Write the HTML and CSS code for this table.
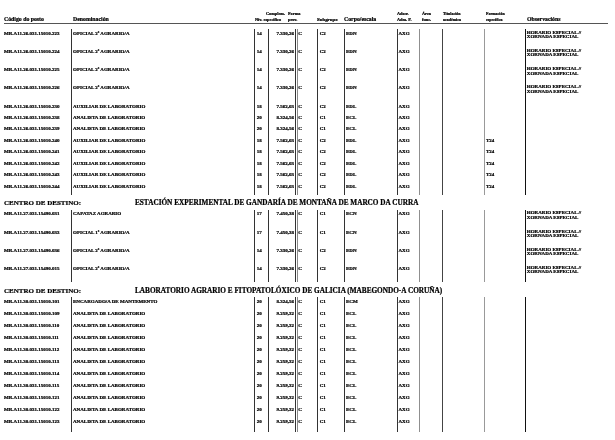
FILE: index.html
```html
<!DOCTYPE html>
<html lang="gl">
<head>
<meta charset="utf-8">
<title>Relación de postos</title>
<link rel="stylesheet" href="styles.css">
</head>
<body>
<div class="page">
  <div class="head">
    <div class="h"><span>Código do posto</span></div>
    <div class="h"><span>Denominación</span></div>
    <div class="h sm"><span>Nív.</span></div>
    <div class="h sm"><span class="ind">Complem.</span><span>específico</span></div>
    <div class="h sm"><span>Forma</span><span>prov.</span></div>
    <div class="h md"><span>Subgrupo</span></div>
    <div class="h"><span>Corpo/escala</span></div>
    <div class="h sm"><span>Adscr.</span><span>Adm. P.</span></div>
    <div class="h sm"><span>Área</span><span>func.</span></div>
    <div class="h xs"><span>Titulación</span><span>académica</span></div>
    <div class="h xs"><span>Formación</span><span>específica</span></div>
    <div class="h"><span>Observacións</span></div>
  </div>

  <div class="sec s1">
    <div class="row tall"><div class="c code">MR.A11.26.031.15010.223</div><div class="c den">OFICIAL 2ª AGRARIO/A</div><div class="c niv">14</div><div class="c comp">7.330,26</div><div class="c forma">C</div><div class="c sub">C2</div><div class="c corpo">EDN</div><div class="c adsc">AXG</div><div class="c area"></div><div class="c tit"></div><div class="c form"></div><div class="c obs">HORARIO ESPECIAL //<br>XORNADA ESPECIAL</div></div>
    <div class="row tall"><div class="c code">MR.A11.26.031.15010.224</div><div class="c den">OFICIAL 2ª AGRARIO/A</div><div class="c niv">14</div><div class="c comp">7.330,26</div><div class="c forma">C</div><div class="c sub">C2</div><div class="c corpo">EDN</div><div class="c adsc">AXG</div><div class="c area"></div><div class="c tit"></div><div class="c form"></div><div class="c obs">HORARIO ESPECIAL //<br>XORNADA ESPECIAL</div></div>
    <div class="row tall"><div class="c code">MR.A11.26.031.15010.225</div><div class="c den">OFICIAL 2ª AGRARIO/A</div><div class="c niv">14</div><div class="c comp">7.330,26</div><div class="c forma">C</div><div class="c sub">C2</div><div class="c corpo">EDN</div><div class="c adsc">AXG</div><div class="c area"></div><div class="c tit"></div><div class="c form"></div><div class="c obs">HORARIO ESPECIAL //<br>XORNADA ESPECIAL</div></div>
    <div class="row tall"><div class="c code">MR.A11.26.031.15010.226</div><div class="c den">OFICIAL 2ª AGRARIO/A</div><div class="c niv">14</div><div class="c comp">7.330,26</div><div class="c forma">C</div><div class="c sub">C2</div><div class="c corpo">EDN</div><div class="c adsc">AXG</div><div class="c area"></div><div class="c tit"></div><div class="c form"></div><div class="c obs">HORARIO ESPECIAL //<br>XORNADA ESPECIAL</div></div>
    <div class="row"><div class="c code">MR.A11.26.031.15010.230</div><div class="c den">AUXILIAR DE LABORATORIO</div><div class="c niv">18</div><div class="c comp">7.562,03</div><div class="c forma">C</div><div class="c sub">C2</div><div class="c corpo">EDL</div><div class="c adsc">AXG</div><div class="c area"></div><div class="c tit"></div><div class="c form"></div><div class="c obs"></div></div>
    <div class="row"><div class="c code">MR.A11.26.031.15010.238</div><div class="c den">ANALISTA DE LABORATORIO</div><div class="c niv">20</div><div class="c comp">8.324,56</div><div class="c forma">C</div><div class="c sub">C1</div><div class="c corpo">ECL</div><div class="c adsc">AXG</div><div class="c area"></div><div class="c tit"></div><div class="c form"></div><div class="c obs"></div></div>
    <div class="row"><div class="c code">MR.A11.26.031.15010.239</div><div class="c den">ANALISTA DE LABORATORIO</div><div class="c niv">20</div><div class="c comp">8.324,56</div><div class="c forma">C</div><div class="c sub">C1</div><div class="c corpo">ECL</div><div class="c adsc">AXG</div><div class="c area"></div><div class="c tit"></div><div class="c form"></div><div class="c obs"></div></div>
    <div class="row"><div class="c code">MR.A11.26.031.15010.240</div><div class="c den">AUXILIAR DE LABORATORIO</div><div class="c niv">18</div><div class="c comp">7.562,03</div><div class="c forma">C</div><div class="c sub">C2</div><div class="c corpo">EDL</div><div class="c adsc">AXG</div><div class="c area"></div><div class="c tit"></div><div class="c form">T24</div><div class="c obs"></div></div>
    <div class="row"><div class="c code">MR.A11.26.031.15010.241</div><div class="c den">AUXILIAR DE LABORATORIO</div><div class="c niv">18</div><div class="c comp">7.562,03</div><div class="c forma">C</div><div class="c sub">C2</div><div class="c corpo">EDL</div><div class="c adsc">AXG</div><div class="c area"></div><div class="c tit"></div><div class="c form">T24</div><div class="c obs"></div></div>
    <div class="row"><div class="c code">MR.A11.26.031.15010.242</div><div class="c den">AUXILIAR DE LABORATORIO</div><div class="c niv">18</div><div class="c comp">7.562,03</div><div class="c forma">C</div><div class="c sub">C2</div><div class="c corpo">EDL</div><div class="c adsc">AXG</div><div class="c area"></div><div class="c tit"></div><div class="c form">T24</div><div class="c obs"></div></div>
    <div class="row"><div class="c code">MR.A11.26.031.15010.243</div><div class="c den">AUXILIAR DE LABORATORIO</div><div class="c niv">18</div><div class="c comp">7.562,03</div><div class="c forma">C</div><div class="c sub">C2</div><div class="c corpo">EDL</div><div class="c adsc">AXG</div><div class="c area"></div><div class="c tit"></div><div class="c form">T24</div><div class="c obs"></div></div>
    <div class="row last"><div class="c code">MR.A11.26.031.15010.244</div><div class="c den">AUXILIAR DE LABORATORIO</div><div class="c niv">18</div><div class="c comp">7.562,03</div><div class="c forma">C</div><div class="c sub">C2</div><div class="c corpo">EDL</div><div class="c adsc">AXG</div><div class="c area"></div><div class="c tit"></div><div class="c form">T24</div><div class="c obs"></div></div>
  </div>

  <div class="dest"><span class="lbl">CENTRO DE DESTINO:</span><span class="name">ESTACIÓN EXPERIMENTAL DE GANDARÍA DE MONTAÑA DE MARCO DA CURRA</span></div>

  <div class="sec s2">
    <div class="row tall"><div class="c code">MR.A11.27.031.15490.031</div><div class="c den">CAPATAZ AGRARIO</div><div class="c niv">17</div><div class="c comp">7.450,38</div><div class="c forma">C</div><div class="c sub">C1</div><div class="c corpo">ECN</div><div class="c adsc">AXG</div><div class="c area"></div><div class="c tit"></div><div class="c form"></div><div class="c obs">HORARIO ESPECIAL //<br>XORNADA ESPECIAL</div></div>
    <div class="row tall"><div class="c code">MR.A11.27.031.15490.033</div><div class="c den">OFICIAL 1ª AGRARIO/A</div><div class="c niv">17</div><div class="c comp">7.450,38</div><div class="c forma">C</div><div class="c sub">C1</div><div class="c corpo">ECN</div><div class="c adsc">AXG</div><div class="c area"></div><div class="c tit"></div><div class="c form"></div><div class="c obs">HORARIO ESPECIAL //<br>XORNADA ESPECIAL</div></div>
    <div class="row tall"><div class="c code">MR.A11.27.031.15490.036</div><div class="c den">OFICIAL 2ª AGRARIO/A</div><div class="c niv">14</div><div class="c comp">7.330,26</div><div class="c forma">C</div><div class="c sub">C2</div><div class="c corpo">EDN</div><div class="c adsc">AXG</div><div class="c area"></div><div class="c tit"></div><div class="c form"></div><div class="c obs">HORARIO ESPECIAL //<br>XORNADA ESPECIAL</div></div>
    <div class="row tall"><div class="c code">MR.A11.27.031.15490.015</div><div class="c den">OFICIAL 2ª AGRARIO/A</div><div class="c niv">14</div><div class="c comp">7.330,26</div><div class="c forma">C</div><div class="c sub">C2</div><div class="c corpo">EDN</div><div class="c adsc">AXG</div><div class="c area"></div><div class="c tit"></div><div class="c form"></div><div class="c obs">HORARIO ESPECIAL //<br>XORNADA ESPECIAL</div></div>
  </div>

  <div class="dest"><span class="lbl">CENTRO DE DESTINO:</span><span class="name">LABORATORIO AGRARIO E FITOPATOLÓXICO DE GALICIA (MABEGONDO-A CORUÑA)</span></div>

  <div class="sec s3">
    <div class="row"><div class="c code">MR.A11.30.031.15010.101</div><div class="c den">ENCARGADO/A DE MANTEMENTO</div><div class="c niv">20</div><div class="c comp">8.324,56</div><div class="c forma">C</div><div class="c sub">C1</div><div class="c corpo">ECM</div><div class="c adsc">AXG</div><div class="c area"></div><div class="c tit"></div><div class="c form"></div><div class="c obs"></div></div>
    <div class="row"><div class="c code">MR.A11.30.031.15010.109</div><div class="c den">ANALISTA DE LABORATORIO</div><div class="c niv">20</div><div class="c comp">9.259,32</div><div class="c forma">C</div><div class="c sub">C1</div><div class="c corpo">ECL</div><div class="c adsc">AXG</div><div class="c area"></div><div class="c tit"></div><div class="c form"></div><div class="c obs"></div></div>
    <div class="row"><div class="c code">MR.A11.30.031.15010.110</div><div class="c den">ANALISTA DE LABORATORIO</div><div class="c niv">20</div><div class="c comp">9.259,32</div><div class="c forma">C</div><div class="c sub">C1</div><div class="c corpo">ECL</div><div class="c adsc">AXG</div><div class="c area"></div><div class="c tit"></div><div class="c form"></div><div class="c obs"></div></div>
    <div class="row"><div class="c code">MR.A11.30.031.15010.111</div><div class="c den">ANALISTA DE LABORATORIO</div><div class="c niv">20</div><div class="c comp">9.259,32</div><div class="c forma">C</div><div class="c sub">C1</div><div class="c corpo">ECL</div><div class="c adsc">AXG</div><div class="c area"></div><div class="c tit"></div><div class="c form"></div><div class="c obs"></div></div>
    <div class="row"><div class="c code">MR.A11.30.031.15010.112</div><div class="c den">ANALISTA DE LABORATORIO</div><div class="c niv">20</div><div class="c comp">9.259,32</div><div class="c forma">C</div><div class="c sub">C1</div><div class="c corpo">ECL</div><div class="c adsc">AXG</div><div class="c area"></div><div class="c tit"></div><div class="c form"></div><div class="c obs"></div></div>
    <div class="row"><div class="c code">MR.A11.30.031.15010.113</div><div class="c den">ANALISTA DE LABORATORIO</div><div class="c niv">20</div><div class="c comp">9.259,32</div><div class="c forma">C</div><div class="c sub">C1</div><div class="c corpo">ECL</div><div class="c adsc">AXG</div><div class="c area"></div><div class="c tit"></div><div class="c form"></div><div class="c obs"></div></div>
    <div class="row"><div class="c code">MR.A11.30.031.15010.114</div><div class="c den">ANALISTA DE LABORATORIO</div><div class="c niv">20</div><div class="c comp">9.259,32</div><div class="c forma">C</div><div class="c sub">C1</div><div class="c corpo">ECL</div><div class="c adsc">AXG</div><div class="c area"></div><div class="c tit"></div><div class="c form"></div><div class="c obs"></div></div>
    <div class="row"><div class="c code">MR.A11.30.031.15010.115</div><div class="c den">ANALISTA DE LABORATORIO</div><div class="c niv">20</div><div class="c comp">9.259,32</div><div class="c forma">C</div><div class="c sub">C1</div><div class="c corpo">ECL</div><div class="c adsc">AXG</div><div class="c area"></div><div class="c tit"></div><div class="c form"></div><div class="c obs"></div></div>
    <div class="row"><div class="c code">MR.A11.30.031.15010.121</div><div class="c den">ANALISTA DE LABORATORIO</div><div class="c niv">20</div><div class="c comp">9.259,32</div><div class="c forma">C</div><div class="c sub">C1</div><div class="c corpo">ECL</div><div class="c adsc">AXG</div><div class="c area"></div><div class="c tit"></div><div class="c form"></div><div class="c obs"></div></div>
    <div class="row"><div class="c code">MR.A11.30.031.15010.122</div><div class="c den">ANALISTA DE LABORATORIO</div><div class="c niv">20</div><div class="c comp">9.259,32</div><div class="c forma">C</div><div class="c sub">C1</div><div class="c corpo">ECL</div><div class="c adsc">AXG</div><div class="c area"></div><div class="c tit"></div><div class="c form"></div><div class="c obs"></div></div>
    <div class="row last"><div class="c code">MR.A11.30.031.15010.123</div><div class="c den">ANALISTA DE LABORATORIO</div><div class="c niv">20</div><div class="c comp">9.259,32</div><div class="c forma">C</div><div class="c sub">C1</div><div class="c corpo">ECL</div><div class="c adsc">AXG</div><div class="c area"></div><div class="c tit"></div><div class="c form"></div><div class="c obs"></div></div>
  </div>
</div>
</body>
</html>
```
FILE: styles.css
```css
html, body {
  margin: 0;
  padding: 0;
  background: #ffffff;
}
body {
  font-family: "Liberation Serif", "Times New Roman", serif;
  color: #000000;
  font-weight: bold;
  width: 615px;
  height: 440px;
  overflow: hidden;
}
.page {
  padding: 0 5px 0 4px;
  background: #ffffff;
  filter: grayscale(1);
  -webkit-text-stroke: 0.22px #000000;
}

/* header */
.head {
  display: grid;
  grid-template-columns: 69px 182px 8.5px 24.5px 29px 27px 53px 25px 21px 43px 41px 80px;
  height: 23px;
  border-bottom: 1px solid #555555;
  margin-right: 2px;
  font-size: 5.8px;
  line-height: 5.8px;
}
.h {
  display: flex;
  flex-direction: column;
  justify-content: flex-end;
  white-space: nowrap;
}
.h.sm { font-size: 4.3px; }
.h.md { font-size: 4.9px; }
.h.xs { font-size: 4px; }
.h .ind {
  margin-left: 2.5px;
}

/* sections */
.sec {
  font-size: 5px;
  line-height: 5px;
}
.s1 { margin-top: 5px; }
.row {
  display: grid;
  grid-template-columns: 67px 183px 14px 27px 22px 27px 53px 22px 23px 42px 41px 85px;
  height: 11.43px;
}
.s3 .row { height: 12.04px; }
.row.tall { height: 18.2px; }
.s1 .row.last { height: 13.43px; }
.s3 .row.last { height: 14.34px; }

.c {
  padding-top: 1.8px;
  white-space: nowrap;
  box-sizing: border-box;
}
.den   { border-left: 1px solid #333333; padding-left: 1px; }
.niv   { border-left: 1px solid #333333; padding-left: 1.7px; }
.comp  { border-left: 1px solid #333333; text-align: right; padding-right: 1px; }
.forma {
  border-left: 1px solid #333333;
  box-shadow: inset 1px 0 0 #ffffff, inset 2px 0 0 #8a8a8a;
  padding-left: 2.3px;
}
.sub   { border-left: 1px solid #333333; padding-left: 1.7px; }
.corpo { border-left: 1px solid #333333; padding-left: 1px; }
.adsc  { border-left: 1px solid #333333; padding-left: 0.5px; }
.area  { border-left: 1px solid #8f8f8f; }
.tit   { border-left: 1px solid #444444; }
.form  { border-left: 1px solid #999999; padding-left: 1px; }
.obs   { border-left: 1px solid #111111; padding-left: 0.8px; line-height: 4.5px; }

/* destination headers */
.dest {
  display: flex;
  align-items: baseline;
  height: 14.5px;
  box-sizing: border-box;
  padding-top: 4.3px;
  font-size: 7px;
  line-height: 8px;
  white-space: nowrap;
}
.lbl { width: 131px; flex: none; }
.name { font-size: 7.25px; }
```
